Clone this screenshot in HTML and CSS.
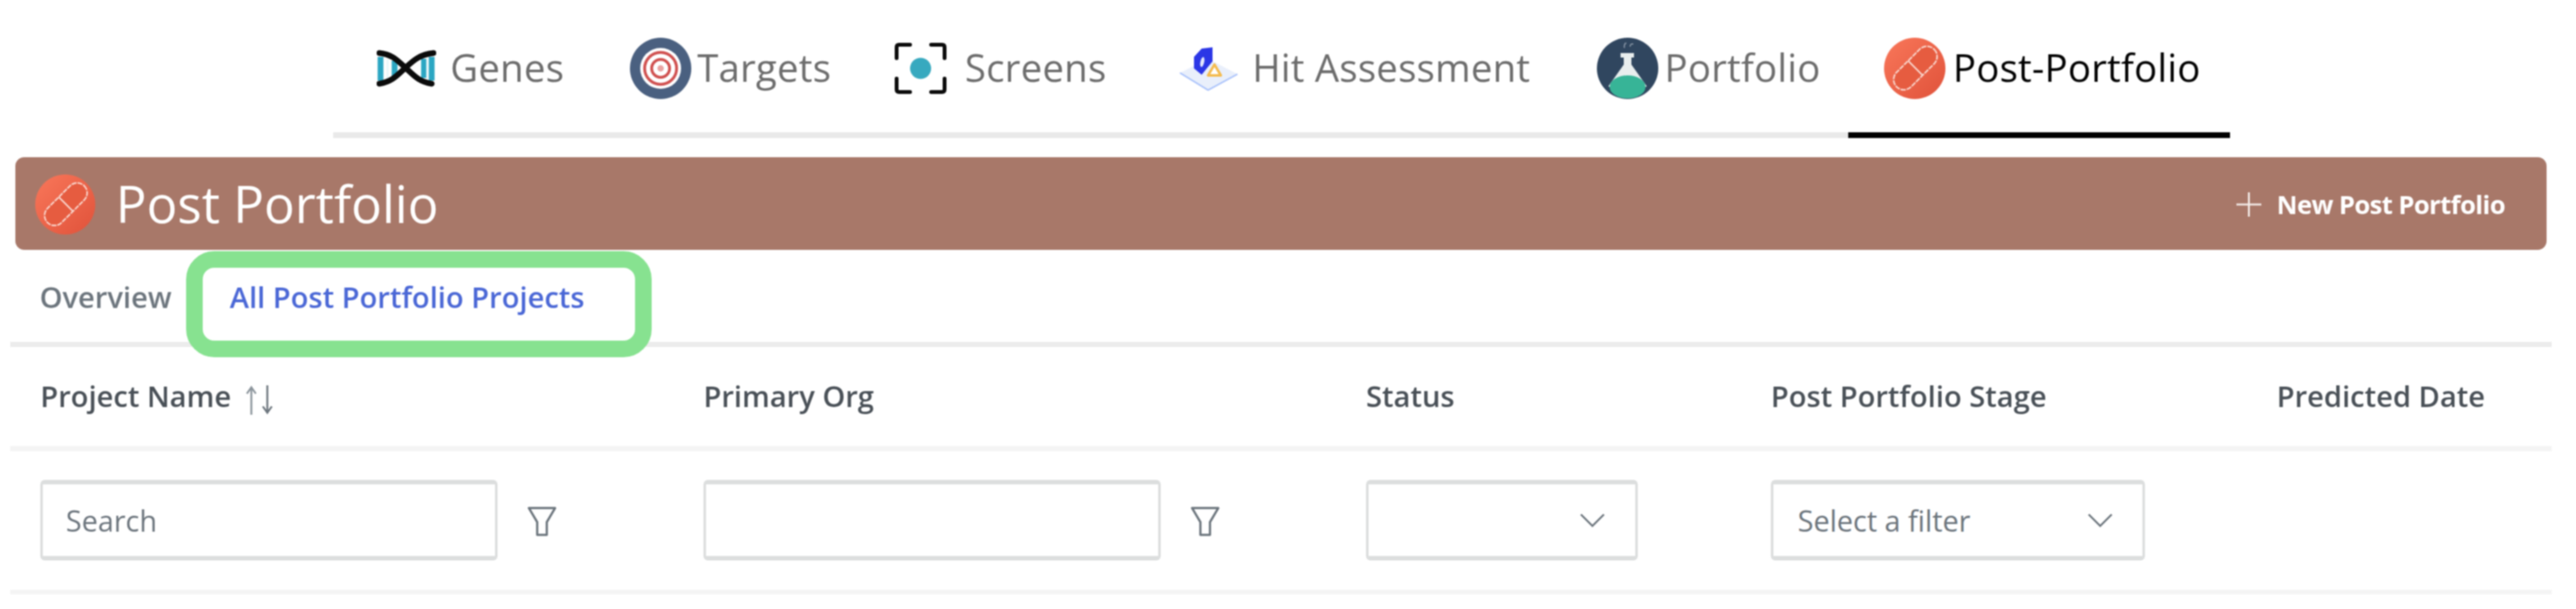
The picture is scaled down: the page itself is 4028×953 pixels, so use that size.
FILE: index.html
```html
<!DOCTYPE html>
<html lang="en">
<head>
<meta charset="utf-8">
<title>Post Portfolio</title>
<link rel="stylesheet" href="styles.css">
</head>
<body>
<svg class="defs" width="0" height="0" aria-hidden="true">
  <defs>
    <linearGradient id="pillbg" x1="0" y1="0" x2="1" y2="1">
      <stop offset="0" stop-color="#f9775a"/>
      <stop offset="1" stop-color="#e0523a"/>
    </linearGradient>
    <symbol id="pill" viewBox="0 0 96 96">
      <circle cx="48" cy="48" r="48" fill="url(#pillbg)"/>
      <g transform="rotate(45 49 47.500)">
        <rect x="33" y="6" width="32" height="83" rx="16" fill="#e65c40" stroke="#f9d8cf" stroke-width="2.500" stroke-dasharray="8 1.500"/>
        <path d="M33 47.500H65" stroke="#f9d8cf" stroke-width="2.500"/>
      </g>
    </symbol>
    <symbol id="funnel" viewBox="0 0 45 46">
      <path d="M2 2H43L30 24V44H15V24Z" fill="none" stroke="#6c757d" stroke-width="3.500" stroke-linejoin="round"/>
    </symbol>
    <symbol id="chevron" viewBox="0 0 40 22">
      <path d="M2 2L20 20L38 2" fill="none" stroke="#6c757d" stroke-width="3"/>
    </symbol>
  </defs>
</svg>

<nav class="nav">
  <a class="nav-item nav-genes">
    <svg class="icon-genes" viewBox="0 0 93 58">
      <path d="M6 11V48M28 17V42M74 14V44M86 11V48" stroke="#2ba6c2" stroke-width="9"/>
      <path d="M17 15V44M79 14V46" stroke="#eaf7fa" stroke-width="3"/>
      <path d="M4 5C24 7 32 16 45 28C58 40 66 50 86 53M89 5C68 7 58 16 45 28C32 40 24 50 4 53" fill="none" stroke="#0b0b0b" stroke-width="9" stroke-linecap="round"/>
    </svg>
    <span class="nav-label">Genes</span>
  </a>
  <a class="nav-item nav-targets">
    <svg class="icon-round" viewBox="0 0 96 96">
      <circle cx="48" cy="48" r="48" fill="#4a6080"/>
      <circle cx="48" cy="48" r="32" fill="#fff"/>
      <circle cx="48" cy="48" r="25" fill="none" stroke="#d0504f" stroke-width="4.500"/>
      <circle cx="48" cy="48" r="14" fill="none" stroke="#d0504f" stroke-width="4.500"/>
      <circle cx="48" cy="48" r="5" fill="#e9a3a2"/>
    </svg>
    <span class="nav-label">Targets</span>
  </a>
  <a class="nav-item nav-screens">
    <svg class="icon-screens" viewBox="0 0 81 80">
      <path d="M3 24V7Q3 3 7 3H24M57 3H74Q78 3 78 7V24M78 56V73Q78 77 74 77H57M24 77H7Q3 77 3 73V56" fill="none" stroke="#0a0a0a" stroke-width="6" stroke-linecap="round"/>
      <circle cx="40.500" cy="40" r="16.500" fill="#37a9bf"/>
    </svg>
    <span class="nav-label">Screens</span>
  </a>
  <a class="nav-item nav-hit">
    <svg class="icon-hit" viewBox="0 0 92 70">
      <path d="M45 20L91 44L45 69L1 42Z" fill="#e9effb"/>
      <path d="M1 42L45 69L91 44" fill="none" stroke="#a9c2fb" stroke-width="2.500"/>
      <path d="M35 4L52 2V24L43 35L35 45L23 35V17Z" fill="#2b36e6"/>
      <ellipse cx="36" cy="25" rx="3" ry="8" fill="#e4e8fb" transform="rotate(12 36 25)"/>
      <path d="M55 29L65 46H45Z" fill="#fff" stroke="#f4bb4e" stroke-width="4" stroke-linejoin="round"/>
    </svg>
    <span class="nav-label">Hit Assessment</span>
  </a>
  <a class="nav-item nav-portfolio">
    <svg class="icon-round" viewBox="0 0 96 96">
      <circle cx="48" cy="48" r="48" fill="#30465f"/>
      <path d="M37 24H58V31H54V42L78 76L48 95L18 76L42 42V31H37Z" fill="#e9eeee"/>
      <ellipse cx="48" cy="77" rx="28" ry="18" fill="#37b497"/>
      <path d="M43 16Q42 10 46 8M52 14Q52 9 57 10" fill="none" stroke="#8593a3" stroke-width="2"/>
    </svg>
    <span class="nav-label">Portfolio</span>
  </a>
  <a class="nav-item nav-post is-active">
    <svg class="icon-round"><use href="#pill"/></svg>
    <span class="nav-label">Post-Portfolio</span>
  </a>
</nav>

<main class="page">
  <header class="banner">
    <svg class="banner-icon"><use href="#pill"/></svg>
    <h1 class="banner-title">Post Portfolio</h1>
    <a class="banner-action">
      <svg class="plus" viewBox="0 0 39 38"><path d="M19.500 0V38M0 19H39" stroke="#f4ece9" stroke-width="3"/></svg>
      <span>New Post Portfolio</span>
    </a>
  </header>

  <div class="tabs">
    <a class="tab tab-overview">Overview</a>
    <a class="tab tab-active">All Post Portfolio Projects</a>
    <div class="callout"></div>
  </div>

  <div class="row row-head">
    <div class="cell">Project Name
      <svg class="sort" viewBox="0 0 45 46"><path d="M10 46V3M3 13L10 3L17 13" fill="none" stroke="#8b949b" stroke-width="3"/><path d="M35 0V43M28 33L35 43L42 33" fill="none" stroke="#6c757d" stroke-width="3"/></svg>
    </div>
    <div class="cell">Primary Org</div>
    <div class="cell">Status</div>
    <div class="cell">Post Portfolio Stage</div>
    <div class="cell">Predicted Date</div>
  </div>

  <div class="row row-filter">
    <div class="cell">
      <input class="field field-text" type="text" placeholder="Search">
      <svg class="funnel"><use href="#funnel"/></svg>
    </div>
    <div class="cell">
      <input class="field field-text" type="text">
      <svg class="funnel"><use href="#funnel"/></svg>
    </div>
    <div class="cell">
      <div class="field field-select field-status"><svg class="chevron"><use href="#chevron"/></svg></div>
    </div>
    <div class="cell">
      <div class="field field-select field-stage"><span>Select a filter</span><svg class="chevron"><use href="#chevron"/></svg></div>
    </div>
    <div class="cell"></div>
  </div>
</main>
</body>
</html>
```

FILE: styles.css
```css
* {
  box-sizing: border-box;
}

html,
body {
  margin: 0;
  background: #fff;
}

body {
  width: 4028px;
  height: 953px;
  overflow: hidden;
  font-family: "Open Sans", "Noto Sans", sans-serif;
  color: #495057;
}

.defs {
  display: block;
  height: 0;
}

/* the source is a soft, upscaled capture */
.nav,
.page {
  filter: blur(0.8px);
}

/* top navigation */
.nav {
  display: flex;
  align-items: center;
  height: 216px;
  width: 2965px;
  margin-left: 521px;
  padding-top: 7px;
  border-bottom: 9px solid #e9e9e9;
}

.nav-item {
  display: flex;
  align-items: center;
  align-self: stretch;
  margin-bottom: -9px;
  border-bottom: 9px solid transparent;
  color: #6c6c6c;
}

.nav-label {
  font-size: 60px;
  letter-spacing: 0.35px;
  padding-bottom: 4px;
  white-space: nowrap;
}

.nav-genes { margin-left: 68px; gap: 22px; }
.nav-targets { margin-left: 103px; gap: 9px; }
.nav-screens { margin-left: 99px; gap: 29px; }
.nav-hit { margin-left: 114px; gap: 22px; }
.nav-portfolio { margin-left: 104px; gap: 10px; }
.nav-post { margin-left: 43px; gap: 12px; padding: 0 46px 0 56px; }

.is-active {
  color: #000;
  border-bottom-color: #000;
}

.icon-genes { width: 93px; height: 58px; }
.icon-round { width: 96px; height: 96px; flex: none; }
.icon-screens { width: 81px; height: 80px; }
.icon-hit { width: 92px; height: 70px; }

/* page */
.page {
  margin: 0 38px 0 16px;
}

.banner {
  display: flex;
  align-items: center;
  height: 145px;
  margin: 30px 8px 0;
  padding: 2px 65px 0 31px;
  background: #a87869;
  border-radius: 14px;
  color: #fff;
}

.banner-icon {
  width: 94px;
  height: 94px;
  flex: none;
}

.banner-title {
  margin: 0 0 4px 32px;
  font-size: 80px;
  font-weight: 400;
  line-height: 1.2;
}

.banner-action {
  display: flex;
  align-items: center;
  gap: 24px;
  margin-left: auto;
  font-size: 40px;
  font-weight: 700;
  letter-spacing: -0.9px;
}

.plus {
  width: 39px;
  height: 38px;
}

/* tabs */
.tabs {
  position: relative;
  display: flex;
  align-items: baseline;
  height: 152px;
  padding: 43px 0 0 46px;
  border-bottom: 8px solid #ececec;
}

.tab {
  font-size: 45.500px;
  font-weight: 600;
  line-height: 60px;
}

.tab-overview {
  color: #6c757d;
}

.tab-active {
  margin-left: 91px;
  color: #4a67d6;
}

.callout {
  position: absolute;
  left: 275px;
  top: 2px;
  width: 728px;
  height: 166px;
  border: 26px solid #87e290;
  border-radius: 44px;
}

/* table */
.row {
  display: grid;
  grid-template-columns: 1037px 1036px 633px 791px 477px;
}

.row-head {
  height: 163px;
  border-bottom: 8px solid #f4f4f4;
  font-size: 45.500px;
  font-weight: 600;
  line-height: 60px;
}

.row-head .cell {
  display: flex;
  align-items: flex-start;
  padding: 46px 0 0 47px;
  color: #495057;
}

.sort {
  width: 45px;
  height: 46px;
  margin: 14px 0 0 22px;
}

.row-filter {
  height: 224px;
  padding-top: 45px;
  border-bottom: 7px solid #f4f4f4;
}

.row-filter .cell {
  display: flex;
  align-items: flex-start;
  padding-left: 47px;
}

.field {
  height: 126px;
  margin: 0;
  background: #fff;
  border-style: solid;
  border-color: #dcdede;
  border-width: 7px 4px;
  border-radius: 7px;
  font-family: inherit;
  font-size: 45px;
  color: #6c757d;
  outline: none;
}

.field-text {
  width: 715px;
  padding: 0 36px;
}

.field-text::placeholder {
  color: #6c757d;
  opacity: 1;
}

.funnel {
  width: 45px;
  height: 46px;
  margin: 42px 0 0 47px;
}

.field-select {
  display: flex;
  align-items: center;
  justify-content: space-between;
  padding: 0 46px 0 38px;
}

.field-status { width: 425px; justify-content: flex-end; padding-right: 47px; }
.field-stage { width: 585px; }

.chevron {
  width: 40px;
  height: 22px;
  flex: none;
}
```
